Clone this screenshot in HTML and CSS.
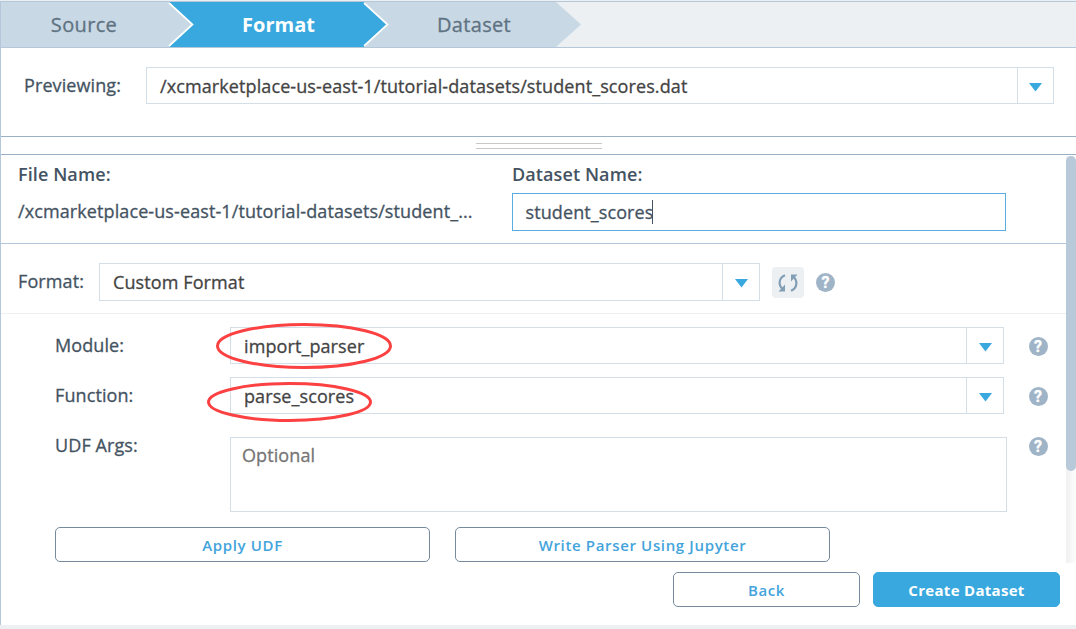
FILE: index.html
```html
<!DOCTYPE html>
<html lang="en">
<head>
<meta charset="utf-8">
<title>Import dataset</title>
<link rel="stylesheet" href="styles.css">
</head>
<body>
<div class="panel">
  <nav class="steps">
    <svg class="steps-bg" width="1075" height="45" viewBox="0 0 1075 45">
      <path d="M0 0H555L580 22.5L555 45H0Z" fill="#c8d8e4"/>
      <path d="M168 0H363L386 22.5L363 45H168L192 22.5Z" fill="#38a8de"/>
      <path d="M168 1L191.500 22.500L168 44M363 1L386.500 22.500L363 44" fill="none" stroke="#fff" stroke-width="1.700"/>
    </svg>
    <span class="step step-source">Source</span>
    <span class="step step-format">Format</span>
    <span class="step step-dataset">Dataset</span>
  </nav>
  <section class="preview">
    <label class="preview-label">Previewing:</label>
    <div class="select preview-select"><span class="value">/xcmarketplace-us-east-1/tutorial-datasets/student_scores.dat</span><span class="arrow"><svg width="13" height="9" viewBox="0 0 13 9"><path d="M0 0H13L6.500 8.500Z" fill="#38a8de"/></svg></span></div>
  </section>
  <div class="splitter"><div class="grip"></div></div>
  <div class="scroll">
    <main class="form">
      <section class="names">
        <div class="file-col"><b class="heading">File Name:</b><div class="path">/xcmarketplace-us-east-1/tutorial-datasets/student_...</div></div>
        <div class="name-col"><b class="heading">Dataset Name:</b><div class="input">student_scores<i class="caret"></i></div></div>
      </section>
      <section class="format-row">
        <label class="format-label">Format:</label>
        <div class="select format-select"><span class="value">Custom Format</span><span class="arrow"><svg width="13" height="9" viewBox="0 0 13 9"><path d="M0 0H13L6.500 8.500Z" fill="#38a8de"/></svg></span></div>
        <button class="refresh"><svg width="22" height="20" viewBox="0 0 22 20"><g fill="none" stroke="#829eb5" stroke-width="2.200"><path d="M8 2.300C1.500 5 1 12.500 6 16.500M14 17.700C20.500 15 21 7.500 16 3.500"/></g><path d="M8 11.500V18.500H1.500ZM14 8.500V1.500H20.500Z" fill="#829eb5"/></svg></button>
        <span class="help">?</span>
      </section>
      <section class="udf">
        <div class="field">
          <label>Module:</label>
          <div class="select udf-select"><span class="value">import_parser</span><span class="arrow"><svg width="13" height="9" viewBox="0 0 13 9"><path d="M0 0H13L6.500 8.500Z" fill="#38a8de"/></svg></span>
            <svg class="mark mark-module" width="178" height="48" viewBox="0 0 178 48"><ellipse cx="89" cy="24" rx="86.500" ry="21.500"/></svg></div>
          <span class="help">?</span>
        </div>
        <div class="field">
          <label>Function:</label>
          <div class="select udf-select"><span class="value">parse_scores</span><span class="arrow"><svg width="13" height="9" viewBox="0 0 13 9"><path d="M0 0H13L6.500 8.500Z" fill="#38a8de"/></svg></span>
            <svg class="mark mark-function" width="168" height="42" viewBox="0 0 168 42"><ellipse cx="84.500" cy="21" rx="81" ry="18.500"/></svg></div>
          <span class="help">?</span>
        </div>
        <div class="field">
          <label>UDF Args:</label>
          <div class="textarea">Optional</div>
          <span class="help">?</span>
        </div>
        <div class="actions"><button class="btn">Apply UDF</button><button class="btn">Write Parser Using Jupyter</button></div>
      </section>
    </main>
    <div class="track"><div class="thumb"></div></div>
  </div>
  <footer class="footer"><button class="btn">Back</button><button class="btn primary">Create Dataset</button></footer>
</div>
</body>
</html>
```
FILE: styles.css
```css
* { box-sizing: border-box; }
body { margin: 0; width: 1076px; height: 629px; overflow: hidden; background: #ecf0f3; font: 400 18px/26px "Open Sans", "Noto Sans", sans-serif; color: #445362; letter-spacing: .1px; -webkit-text-stroke: .3px; }
button { font: inherit; padding: 0; border: 0; }
.panel { height: 624px; margin-top: 1px; border-left: 1px solid #b5c8da; background: #fff; display: flex; flex-direction: column; }
.steps { height: 47px; flex: none; border-top: 1px solid #b5c8da; border-bottom: 1px solid #b5c8da; background: #ecf0f3; position: relative; display: grid; grid-template-columns: 166px 223px 168px; align-items: center; text-align: center; font-size: 20px; letter-spacing: .35px; color: #5f7282; }
.steps-bg { position: absolute; left: 0; top: 0; }
.step { position: relative; }
.step-format { font-weight: 700; color: #fff; letter-spacing: 0; -webkit-text-stroke: 0; }
.preview { height: 88px; flex: none; display: flex; align-items: flex-start; padding: 19px 22px 0 23px; }
.preview-label { width: 122px; padding-top: 5px; }
.select { position: relative; display: flex; align-items: center; justify-content: space-between; height: 37px; border: 1px solid #d4dee6; background: #fff; color: #444; }
.value { padding-left: 13px; white-space: nowrap; }
.arrow { width: 36px; height: 100%; border-left: 1px solid #d4dee6; display: flex; align-items: center; justify-content: center; padding-top: 3px; }
.preview-select { flex: 1; }
.splitter { height: 19px; flex: none; border-top: 1px solid #9ab0c5; border-bottom: 1px solid #9ab0c5; padding: 6px 0 0 475px; width: 100%; }
.grip { width: 126px; height: 6px; border-top: 1px solid #c8c8c8; border-bottom: 1px solid #c8c8c8; }
.scroll { height: 408px; flex: none; display: flex; }
.form { width: 1065px; }
.names { height: 89px; border-bottom: 1px solid #b5c8da; display: grid; grid-template-columns: 494px 494px; padding: 6px 0 0 17px; }
.heading { display: block; font-weight: 600; height: 32px; -webkit-text-stroke: 0; }
.path { padding-top: 5px; white-space: nowrap; }
.input { height: 38px; border: 1px solid #59ade0; padding: 5px 12.5px; display: flex; }
.caret { width: 1px; height: 24px; margin: 1px 0 0 -1px; background: #445362; }
.format-row { height: 70px; border-bottom: 1px solid #ecf0f3; display: flex; padding: 19px 0 0 17px; }
.format-label { width: 81px; padding-top: 5px; }
.format-select { width: 661px; height: 38px; }
.format-select .arrow, .udf-select .arrow { width: 37px; }
.refresh { width: 32px; height: 31px; margin: 4px 12px 0; border-radius: 4px; background: #ecf0f3; display: flex; align-items: center; justify-content: center; }
.help { width: 19px; height: 19px; border-radius: 50%; background: #a0b4c8; color: #fff; font: 700 16px/20px Roboto, sans-serif; letter-spacing: 0; text-align: center; margin-top: 10px; }
.udf { padding: 13px 0 0 54px; }
.field { display: flex; height: 50px; }
.field label { width: 175px; padding-top: 5px; }
.udf-select { width: 774px; }
.udf-select + .help { margin-left: 24.5px; }
.textarea { width: 777px; height: 75px; margin-top: 10px; border: 1px solid #d4dee6; color: #757575; padding: 4px 11px; }
.textarea + .help { margin-left: 21.5px; }
.mark { position: absolute; fill: none; stroke: #fb4141; stroke-width: 3px; overflow: visible; }
.mark-module { left: -16px; top: -6px; }
.mark-function { left: -26px; top: 3px; }
.actions { display: flex; gap: 25px; padding-top: 50px; }
.btn { height: 35px; border: 1px solid #768a9c; border-radius: 5px; background: #fff; color: #43a4dc; font-size: 15px; font-weight: 600; letter-spacing: .65px; -webkit-text-stroke: 0; }
.actions .btn { width: 375px; }
.track { width: 10px; background: linear-gradient(90deg, #f1f1f1, #fcfcfc); margin-top: 1px; }
.thumb { height: 315px; border-radius: 5px; background: #b8c9d9; }
.footer { display: flex; justify-content: flex-end; gap: 13px; padding: 9px 16px 0 0; }
.footer .btn { width: 187px; }
.footer .primary { background: #38a8de; border-color: #38a8de; color: #fff; font-weight: 700; letter-spacing: .3px; }
```
